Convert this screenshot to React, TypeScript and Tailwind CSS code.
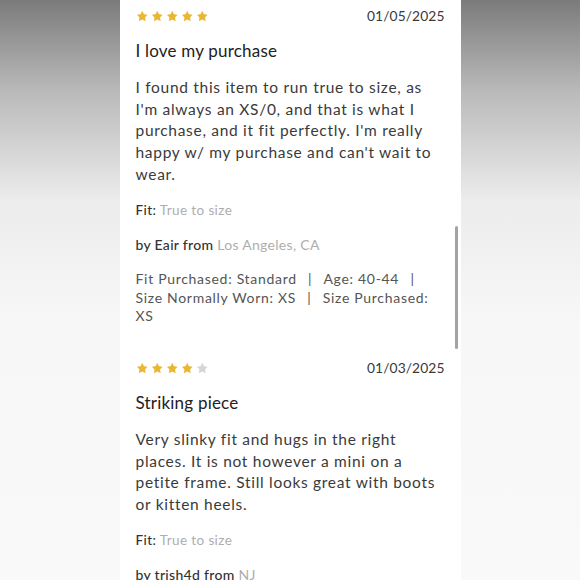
import { Star } from 'lucide-react';

type Review = {
  rating: number;
  date: string;
  title: string;
  body: string;
  fit: string;
  author: string;
  location: string;
  meta?: string[];
};

const reviews: Review[] = [
  {
    rating: 5,
    date: '01/05/2025',
    title: 'I love my purchase',
    body: "I found this item to run true to size, as I'm always an XS/0, and that is what I purchase, and it fit perfectly. I'm really happy w/ my purchase and can't wait to wear.",
    fit: 'True to size',
    author: 'Eair',
    location: 'Los Angeles, CA',
    meta: ['Fit Purchased: Standard', 'Age: 40-44', 'Size Normally Worn: XS', 'Size Purchased: XS'],
  },
  {
    rating: 4,
    date: '01/03/2025',
    title: 'Striking piece',
    body: 'Very slinky fit and hugs in the right places. It is not however a mini on a petite frame. Still looks great with boots or kitten heels.',
    fit: 'True to size',
    author: 'trish4d',
    location: 'NJ',
  },
];

function Stars({ rating }: { rating: number }) {
  return (
    <div className="flex items-center gap-[2.5px]">
      {[0, 1, 2, 3, 4].map((i) => (
        <Star
          key={i}
          strokeWidth={0}
          className={
            i < rating
              ? 'h-[12.5px] w-[12.5px] fill-[#e9b732]'
              : 'h-[12.5px] w-[12.5px] fill-[#d6d6d6]'
          }
        />
      ))}
    </div>
  );
}

function ReviewItem({ review }: { review: Review }) {
  return (
    <div>
      {/* Rating + date */}
      <div className="flex h-[18px] items-center justify-between">
        <Stars rating={review.rating} />
        <span className="text-[13.8px] tracking-[0.1px] text-[#3a3a3a]">{review.date}</span>
      </div>

      {/* Title */}
      <h3 className="mt-[14px] text-[17px] leading-[24px] tracking-[0.2px] text-[#222]">{review.title}</h3>

      {/* Body */}
      <p className="mt-[14px] text-[15.5px] leading-[21.7px] tracking-[0.7px] text-[#3a3a3a]">{review.body}</p>

      {/* Fit */}
      <p className="mt-[14px] text-[13.5px] leading-[20px] tracking-[0.4px]">
        <span className="font-medium text-[#333]">Fit:</span>{' '}
        <span className="text-[#aeaeae]">{review.fit}</span>
      </p>

      {/* Author */}
      <p className="mt-[15px] text-[14px] leading-[20px] tracking-[0.3px]">
        <span className="font-medium text-[#333]">by {review.author} from</span>{' '}
        <span className="text-[#aeaeae]">{review.location}</span>
      </p>

      {review.meta && (
        <p className="mt-[15.5px] text-[14px] leading-[18.5px] tracking-[0.7px] text-[#555]">
          {review.meta.join('\u2003|\u2003')}
        </p>
      )}
    </div>
  );
}

export default function App() {
  return (
    <div className="h-[580px] overflow-hidden bg-[linear-gradient(to_bottom,#7b7b7b_0px,#b9b9b9_90px,#ececec_200px,#f7f7f7_320px,#f9f9f9_580px)] font-['Lato','Noto_Sans',sans-serif]">
      <div className="relative mx-auto h-full w-[341px] bg-white px-4 pt-[7px]">
        <div className="flex flex-col gap-[33.5px]">
          {reviews.map((r) => (
            <ReviewItem key={r.date} review={r} />
          ))}
        </div>

        {/* scrollbar */}
        <div className="absolute right-[3px] top-[226px] h-[123px] w-[2.5px] rounded-full bg-[#a3a3a3]" />
      </div>
    </div>
  );
}
